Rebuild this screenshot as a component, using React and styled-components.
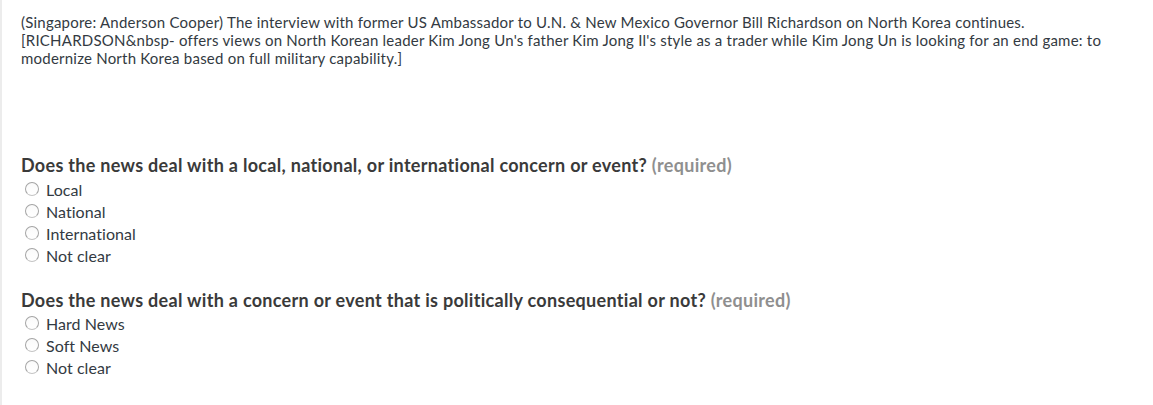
import React from "react";
import styled, { createGlobalStyle } from "styled-components";

const Global = createGlobalStyle`
  body {
    margin: 0;
    background: #fff;
    font-family: Lato, "Liberation Sans", sans-serif;
    color: #333a42;
  }
`;

const Page = styled.div`
  border-left: 2px solid #ececec;
  min-height: 405px;
  box-sizing: border-box;
  padding: 13px 20px 0 19px;
`;

const Story = styled.p`
  margin: 0;
  font-size: 15px;
  letter-spacing: 0.22px;
  line-height: 18px;
  height: 142px;
`;

const Question = styled.div`
  margin-bottom: 24px;
`;

const Prompt = styled.h3`
  margin: 0 0 ${(p) => p.$gap}px;
  font-size: 18px;
  letter-spacing: 0.3px;
  line-height: 20px;
  font-weight: 700;
  color: #3a3a3a;
`;

const Required = styled.span`
  color: #8f8f8f;
`;

const Option = styled.label`
  display: flex;
  align-items: center;
  height: 22px;
  font-size: 16px;
  letter-spacing: 0.05px;
  padding-left: 4px;
  gap: 7px;
`;

const Circle = styled.span`
  width: 12px;
  height: 12px;
  border-radius: 50%;
  border: 1px solid #a4a4a4;
  border-bottom-color: #c4c4c4;
  background: linear-gradient(#fafafa, #fff);
  flex: none;
`;

const questions = [
  {
    text: "Does the news deal with a local, national, or international concern or event?",
    options: ["Local", "National", "International", "Not clear"],
    gap: 3,
  },
  {
    text: "Does the news deal with a concern or event that is politically consequential or not?",
    options: ["Hard News", "Soft News", "Not clear"],
    gap: 2,
  },
];

export default function App() {
  return (
    <>
      <Global />
      <Page>
        <Story>
          (Singapore: Anderson Cooper) The interview with former US Ambassador to U.N. &amp; New Mexico
          Governor Bill Richardson on North Korea continues.
          <br />
          [RICHARDSON&amp;nbsp- offers views on North Korean leader Kim Jong Un's father Kim Jong Il's
          style as a trader while Kim Jong Un is looking for an end game: to modernize North Korea
          based on full military capability.]
        </Story>
        {questions.map((q) => (
          <Question key={q.text}>
            <Prompt $gap={q.gap}>
              {q.text} <Required>(required)</Required>
            </Prompt>
            {q.options.map((o) => (
              <Option key={o}>
                <Circle />
                {o}
              </Option>
            ))}
          </Question>
        ))}
      </Page>
    </>
  );
}
